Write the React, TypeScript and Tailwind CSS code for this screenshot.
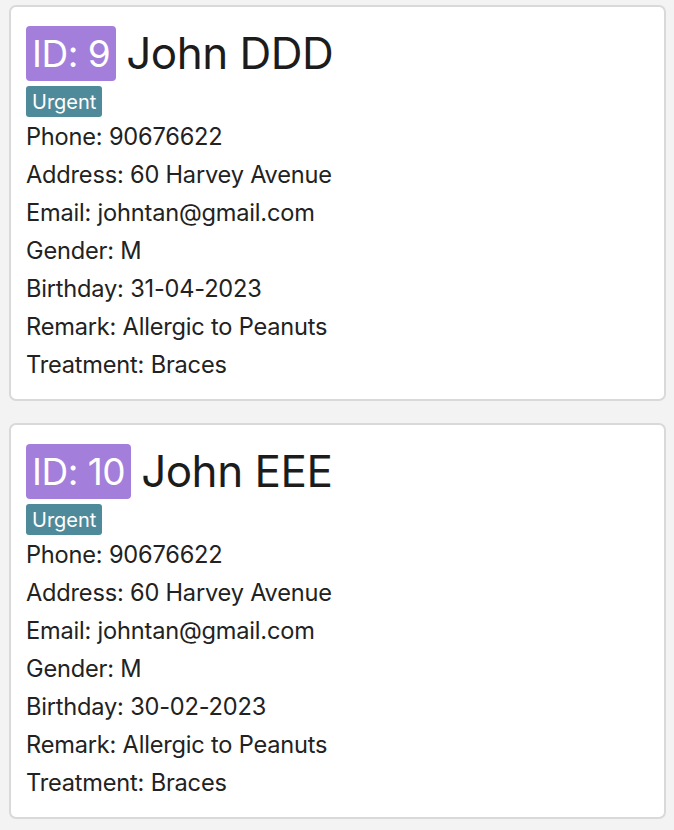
const patients = [
  {
    id: 9,
    name: 'John DDD',
    tags: ['Urgent'],
    phone: '90676622',
    address: '60 Harvey Avenue',
    email: 'johntan@gmail.com',
    gender: 'M',
    birthday: '31-04-2023',
    remark: 'Allergic to Peanuts',
    treatment: 'Braces',
  },
  {
    id: 10,
    name: 'John EEE',
    tags: ['Urgent'],
    phone: '90676622',
    address: '60 Harvey Avenue',
    email: 'johntan@gmail.com',
    gender: 'M',
    birthday: '30-02-2023',
    remark: 'Allergic to Peanuts',
    treatment: 'Braces',
  },
];

type Patient = (typeof patients)[number];

function PatientCard({ p }: { p: Patient }) {
  return (
    <div className="bg-white border-2 border-[#d9d9d9] rounded-[7px] pt-[19px] pb-[15px] px-[15px]">
      <div className="flex items-center gap-[10px] h-[55px] leading-none">
        <span className="bg-[#a37edb] text-white rounded-[4px] px-[6px] h-[55px] flex items-center text-[37px] tracking-[-0.5px]">
          ID: {p.id}
        </span>
        <span className="text-[44px] text-[#1c1c1c] tracking-[-0.5px] pb-[2px]">{p.name}</span>
      </div>
      <div className="flex gap-2 mt-[5px]">
        {p.tags.map((t) => (
          <span key={t} className="bg-[#4f8a9b] text-white rounded-[3px] px-[6px] h-[31px] flex items-center text-[20px] leading-none">
            {t}
          </span>
        ))}
      </div>
      <div className="text-[23.6px] leading-[38px] text-[#222] tracking-[-0.2px] mt-[1px]">
        <div>Phone: {p.phone}</div>
        <div>Address: {p.address}</div>
        <div>Email: {p.email}</div>
        <div>Gender: {p.gender}</div>
        <div>Birthday: {p.birthday}</div>
        <div>Remark: {p.remark}</div>
        <div>Treatment: {p.treatment}</div>
      </div>
    </div>
  );
}

export default function App() {
  return (
    <div className="min-h-[830px] bg-[#f3f3f3] pl-[9px] pr-[8px] pt-[5px] pb-[12px] flex flex-col gap-[22px] font-['Inter',sans-serif] w-[674px]">
      {patients.map((p) => (
        <PatientCard key={p.id} p={p} />
      ))}
    </div>
  );
}
